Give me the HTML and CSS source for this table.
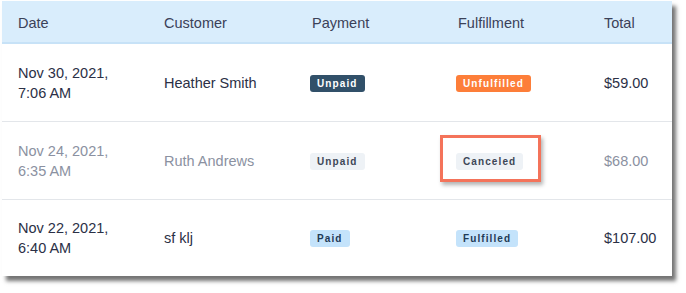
FILE: index.html
```html
<!DOCTYPE html>
<html>
<head>
<meta charset="utf-8">
<link rel="stylesheet" href="styles.css">
</head>
<body>
<div class="panel">
  <div class="row head">
    <div class="cell">Date</div>
    <div class="cell">Customer</div>
    <div class="cell">Payment</div>
    <div class="cell">Fulfillment</div>
    <div class="cell">Total</div>
  </div>
  <div class="row">
    <div class="cell date">Nov 30, 2021,<br>7:06 AM</div>
    <div class="cell">Heather Smith</div>
    <div class="cell"><span class="badge dark">Unpaid</span></div>
    <div class="cell"><span class="badge orange">Unfulfilled</span></div>
    <div class="cell">$59.00</div>
  </div>
  <div class="row muted">
    <div class="cell date">Nov 24, 2021,<br>6:35 AM</div>
    <div class="cell">Ruth Andrews</div>
    <div class="cell"><span class="badge grey">Unpaid</span></div>
    <div class="cell"><span class="badge grey marked">Canceled</span></div>
    <div class="cell">$68.00</div>
  </div>
  <div class="row last">
    <div class="cell date">Nov 22, 2021,<br>6:40 AM</div>
    <div class="cell">sf klj</div>
    <div class="cell"><span class="badge blue">Paid</span></div>
    <div class="cell"><span class="badge blue">Fulfilled</span></div>
    <div class="cell">$107.00</div>
  </div>
</div>
</body>
</html>
```

FILE: styles.css
```css
* { box-sizing: border-box; }
html, body { margin: 0; background: #ffffff; }
body {
  padding: 1px 0 12px 2px;
  font-family: "Liberation Sans", Arial, sans-serif;
  font-size: 14.5px;
  color: #2b3046;
}
.panel {
  width: 670px;
  background: #ffffff;
  box-shadow: 4px 5px 4px rgba(0, 0, 0, 0.55);
}
.row {
  display: grid;
  grid-template-columns: 146px 148px 146px 146px 1fr;
  align-items: center;
  padding-left: 16px;
  height: 78px;
  border-bottom: 1px solid #e3e6ea;
}
.row.last { border-bottom: none; height: 76px; }
.row.head {
  height: 43px;
  background: #d9edfc;
  border-bottom: 2px solid #c7e2f7;
  color: #3b4158;
}
.head .cell { padding-top: 2px; }
.date { line-height: 20px; }
.muted { color: #8b91a1; }
.badge {
  display: inline-block;
  position: relative;
  height: 17px;
  line-height: 17px;
  padding: 0 7px;
  border-radius: 3px;
  font-size: 10px;
  font-weight: bold;
  letter-spacing: 1.1px;
  margin-left: -2px;
}
.dark { background: #315069; color: #ffffff; }
.orange { background: #fd7e39; color: #ffffff; }
.grey { background: #eef2f6; color: #3d4757; }
.blue { background: #c4e3fb; color: #1f3a56; }
.marked::after {
  content: "";
  position: absolute;
  left: -16px;
  right: -18px;
  top: -18px;
  bottom: -12px;
  border: 3px solid #f4735a;
  box-shadow: 2px 3px 4px rgba(0, 0, 0, 0.3);
}
```
